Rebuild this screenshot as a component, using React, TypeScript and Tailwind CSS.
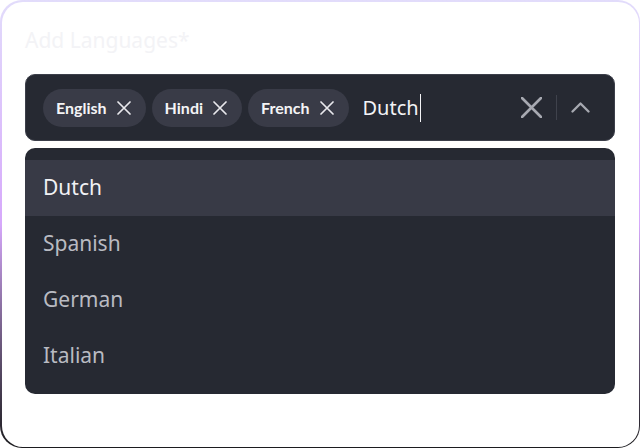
const selected = ["English", "Hindi", "French"];
const options = ["Dutch", "Spanish", "German", "Italian"];

const Cross = ({ size, stroke, color }: { size: number; stroke: number; color: string }) => (
  <svg width={size} height={size} viewBox={`0 0 ${size} ${size}`} fill="none" className="shrink-0">
    <path
      d={`M1 1L${size - 1} ${size - 1}M${size - 1} 1L1 ${size - 1}`}
      stroke={color}
      strokeWidth={stroke}
      strokeLinecap="round"
    />
  </svg>
);

const Chip = ({ label }: { label: string }) => {
  return (
    <div className="flex items-center h-[38px] rounded-full bg-[#393b47] pl-[13px] pr-[15px] gap-[10px]">
      <span className="font-['Lato',sans-serif] text-[16px] font-bold text-[#f4f4f6] leading-none">{label}</span>
      <Cross size={14} stroke={1.7} color="#e8e8ec" />
    </div>
  );
};

export default function App() {
  return (
    <div
      className="w-[640px] h-[448px] rounded-[22px] p-[1.5px] bg-linear-to-b from-[#e2dcfb] via-[#d6a8fb] to-[#1c1c1f]"
      style={{ fontFamily: '"Noto Sans", "Open Sans", sans-serif' }}
    >
      <div className="w-full h-full rounded-[21px] bg-white px-[23.5px] pt-[24px]">
        {/* Label */}
        <div className="text-[21px] leading-[28px] text-[#f3f3f6]">Add Languages*</div>

        {/* Control */}
        <div className="mt-[20.5px] h-[67px] rounded-[10px] border border-[#3c3f4a] bg-[#262932] flex items-center pl-[17px] pr-[24px]">
          <div className="flex items-center gap-[6px]">
            {selected.map((s) => (
              <Chip key={s} label={s} />
            ))}
          </div>
          <div className="flex items-center ml-[14px] flex-1">
            <span className="text-[20px] text-[#f3f3f6] leading-none">Dutch</span>
            <span className="w-[1.5px] h-[28px] bg-[#f3f3f6] ml-px" />
          </div>
          <Cross size={21} stroke={2.6} color="#a7a9b1" />
          <div className="w-px h-[25px] bg-[#3f424c] mx-[14px]" />
          <svg width="19" height="11" viewBox="0 0 19 11" fill="none" className="shrink-0">
            <path d="M1.5 9.5L9.5 1.5L17.5 9.5" stroke="#a7a9b1" strokeWidth={2.3} strokeLinecap="round" strokeLinejoin="round" />
          </svg>
        </div>

        {/* Dropdown */}
        <div className="mt-[7px] rounded-[10px] bg-[#262932] pt-3 pb-2.5 overflow-hidden">
          {options.map((o, i) => (
            <div
              key={o}
              className={
                i === 0
                  ? "h-[56px] flex items-center px-[18px] bg-[#383a46] text-[21px] text-[#f1f1f4]"
                  : "h-[56px] flex items-center px-[18px] text-[21px] text-[#b9bbc2]"
              }
            >
              {o}
            </div>
          ))}
        </div>
      </div>
    </div>
  );
}
